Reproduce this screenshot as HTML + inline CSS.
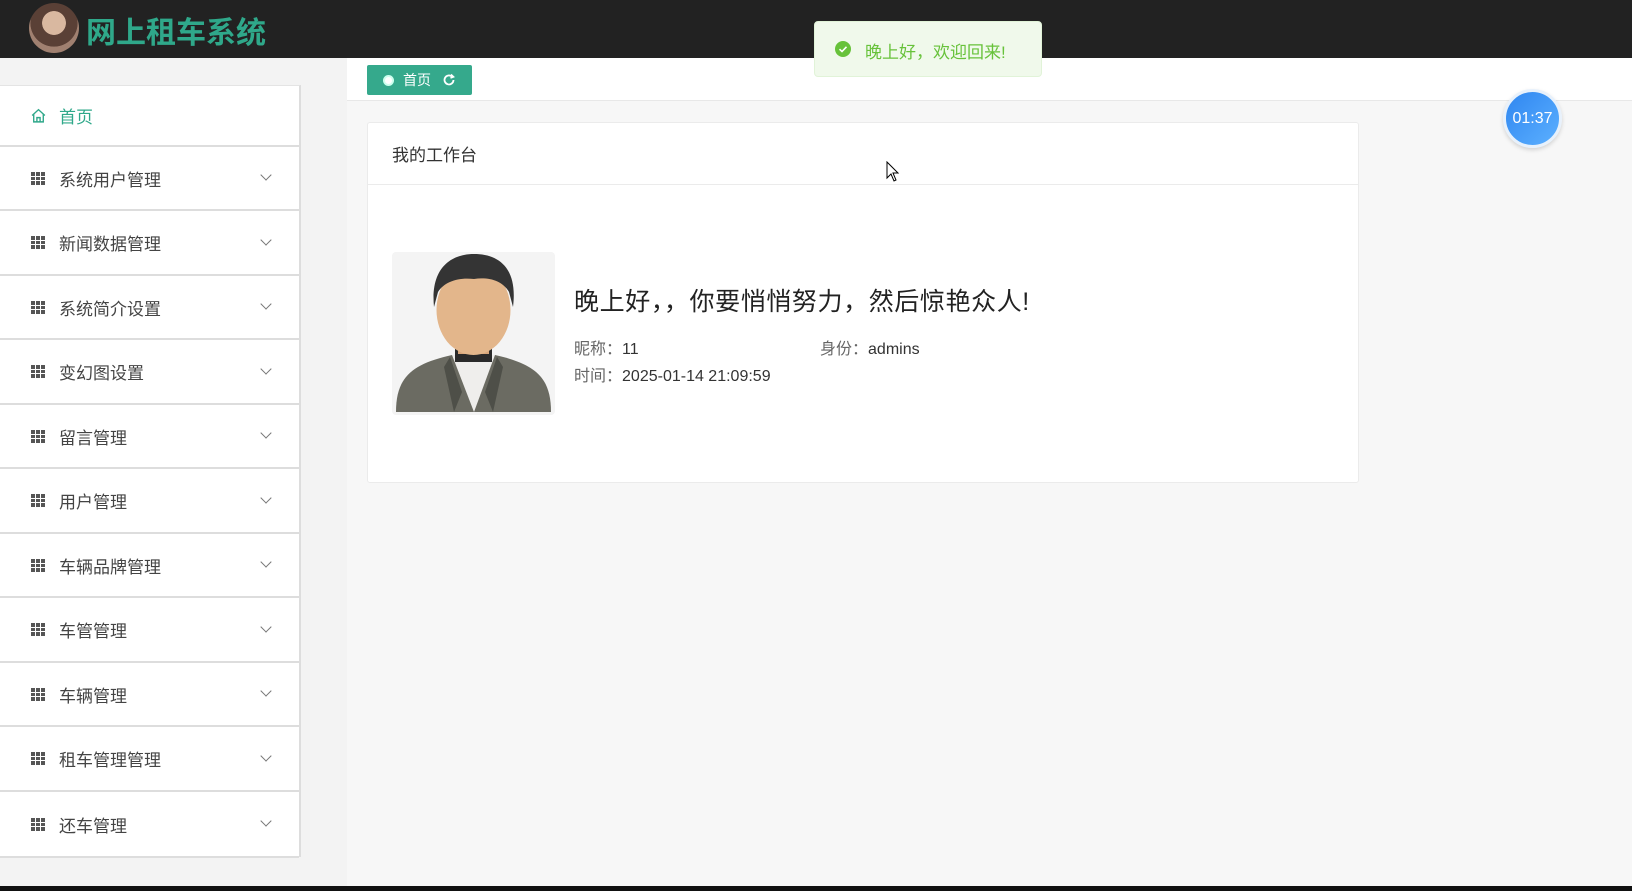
<!DOCTYPE html>
<html><head><meta charset="utf-8"><style>
*{margin:0;padding:0;box-sizing:border-box}
body{width:1632px;height:891px;overflow:hidden;background:#f3f3f3;font-family:"Liberation Sans","Noto Sans CJK SC",sans-serif;position:relative;color:#333}
.hdr{position:absolute;left:0;top:0;width:1632px;height:58px;background:#222}
.logo{position:absolute;left:29px;top:3px;width:50px;height:50px;border-radius:50%;background:radial-gradient(circle at 50% 40%,#d9b8a0 0 30%,#5a4036 31% 60%,#a08070 61%);overflow:hidden}
.title{position:absolute;left:86px;top:8px;font-size:30px;font-weight:bold;color:#2fa88a}
.side{position:absolute;left:0;top:85px;width:301px;height:772px;background:#fff;border-right:2px solid #ddd;border-top:1px solid #e4e4e4}
.it{position:absolute;left:0;width:299px;border-bottom:2px solid #ddd;display:flex;align-items:center;font-size:17px;color:#444}
.it .g{position:absolute;left:31px;width:14px;height:13px;background:#555}
.it .g::before{content:"";position:absolute;left:4px;top:0;width:1px;height:13px;background:#fff;box-shadow:5px 0 0 #fff}
.it .g::after{content:"";position:absolute;left:0;top:4px;width:14px;height:1px;background:#fff;box-shadow:0 4px 0 #fff}
.it span{position:absolute;left:59px}
.it i{position:absolute;left:262px;width:8px;height:8px;border-right:1.5px solid #777;border-bottom:1.5px solid #777;transform:rotate(45deg);margin-top:-6px}
.main{position:absolute;left:347px;top:58px;width:1285px;height:828px;background:#f7f7f7}
.tabs{position:absolute;left:347px;top:58px;width:1285px;height:43px;background:#fff;border-bottom:1px solid #e8e8e8}
.tab{position:absolute;left:367px;top:65px;width:105px;height:30px;background:#35a98c;border-radius:2px;color:#fff;font-size:14px}
.card{position:absolute;left:367px;top:122px;width:992px;height:361px;background:#fff;border:1px solid #ebebeb;border-radius:3px}
.ch{height:62px;border-bottom:1px solid #ebebeb;padding:18px 24px;font-size:17px;color:#333}
.toast{position:absolute;left:814px;top:21px;width:228px;height:56px;background:#f0f9eb;border:1px solid #e1f3d8;border-radius:4px;color:#67c23a;font-size:17px}
.timer{position:absolute;left:1503px;top:89px;width:59px;height:59px;border-radius:50%;background:linear-gradient(135deg,#2f86f0,#5cb0ff);border:3px solid #e8f1fb;color:#fff;font-size:16px;text-align:center;line-height:53px;box-shadow:0 2px 4px rgba(0,0,0,.15)}
.bot{position:absolute;left:0;top:886px;width:1632px;height:5px;background:#111}
</style></head><body>
<div class="hdr"></div>
<div class="logo"></div>
<div class="title">网上租车系统</div>

<div class="side">
<div class="it" style="top:0;height:61px;color:#2fa88a">
<svg style="position:absolute;left:30px" width="17" height="17" viewBox="0 0 16 16"><path d="M2 8 L8 2.5 L14 8 M3.5 6.8 V14 H12.5 V6.8 M6.5 14 V10 H9.5 V14" fill="none" stroke="#2fa88a" stroke-width="1.3"/></svg>
<span>首页</span></div>
<div class="it" style="top:61px;height:64px"><b class="g"></b><span>系统用户管理</span><i></i></div>
<div class="it" style="top:125px;height:65px"><b class="g"></b><span>新闻数据管理</span><i></i></div>
<div class="it" style="top:190px;height:64px"><b class="g"></b><span>系统简介设置</span><i></i></div>
<div class="it" style="top:254px;height:65px"><b class="g"></b><span>变幻图设置</span><i></i></div>
<div class="it" style="top:319px;height:64px"><b class="g"></b><span>留言管理</span><i></i></div>
<div class="it" style="top:383px;height:65px"><b class="g"></b><span>用户管理</span><i></i></div>
<div class="it" style="top:448px;height:64px"><b class="g"></b><span>车辆品牌管理</span><i></i></div>
<div class="it" style="top:512px;height:65px"><b class="g"></b><span>车管管理</span><i></i></div>
<div class="it" style="top:577px;height:64px"><b class="g"></b><span>车辆管理</span><i></i></div>
<div class="it" style="top:641px;height:65px"><b class="g"></b><span>租车管理管理</span><i></i></div>
<div class="it" style="top:706px;height:66px"><b class="g"></b><span>还车管理</span><i></i></div>
</div>

<div class="main"></div>
<div class="tabs"></div>
<div class="tab">
<span style="position:absolute;left:16px;top:10px;width:11px;height:11px;border-radius:50%;background:#fff;border:2px solid #cfe"></span>
<span style="position:absolute;left:36px;top:5px">首页</span>
<svg style="position:absolute;left:75px;top:8px" width="14" height="14" viewBox="0 0 14 14"><path d="M11.5 7 A4.5 4.5 0 1 1 10 3.6" fill="none" stroke="#fff" stroke-width="1.8"/><path d="M9 1.5 L11.5 3.8 L8.5 5" fill="none" stroke="#fff" stroke-width="1.6"/></svg>
</div>

<div class="card">
<div class="ch">我的工作台</div>
<svg style="position:absolute;left:24px;top:129px" width="163" height="163" viewBox="0 0 163 163">
<rect width="163" height="163" rx="4" fill="#f4f4f4"/>
<path d="M4 160 C4 125 20 112 60 103 L103 103 C143 112 159 125 159 160 Z" fill="#6b6b62"/>
<path d="M60 103 L82 160 L103 103 Z" fill="#efeeec"/>
<path d="M58 105 L70 140 L62 160 L52 115Z M105 105 L93 140 L101 160 L111 115Z" fill="#4e4f48"/>
<rect x="63" y="88" width="37" height="22" fill="#2a2a2a"/>
<rect x="66" y="84" width="31" height="18" fill="#d7a57a"/>
<ellipse cx="81.5" cy="58" rx="37" ry="45" fill="#e3b68b"/>
<path d="M42 55 C38 15 60 2 82 2 C106 2 126 15 121 55 L117 40 C110 28 96 25 82 27 C66 25 52 30 46 40 Z" fill="#343434"/>
</svg>
<div style="position:absolute;left:206px;top:159px;font-size:25px;letter-spacing:0.6px;color:#222">晚上好，，你要悄悄努力，然后惊艳众人!</div>
<div style="position:absolute;left:206px;top:212px;font-size:16px;color:#666">昵称：<span style="color:#333">11</span></div>
<div style="position:absolute;left:452px;top:212px;font-size:16px;color:#666">身份：<span style="color:#333">admins</span></div>
<div style="position:absolute;left:206px;top:239px;font-size:16px;color:#666">时间：<span style="color:#333">2025-01-14 21:09:59</span></div>
</div>

<div class="toast">
<svg style="position:absolute;left:20px;top:19px" width="16" height="16" viewBox="0 0 16 16"><circle cx="8" cy="8" r="8" fill="#67c23a"/><path d="M4.5 8.2 L7 10.5 L11.5 5.8" fill="none" stroke="#fff" stroke-width="1.6"/></svg>
<span style="position:absolute;left:50px;top:16px">晚上好，欢迎回来!</span>
</div>

<div class="timer">01:37</div>
<svg style="position:absolute;left:886px;top:161px" width="14" height="22" viewBox="0 0 14 22"><path d="M1 1 L1 17 L5 13 L8 20 L10 19 L7 12 L12 12 Z" fill="#fff" stroke="#000" stroke-width="1"/></svg>
<div class="bot"></div>
</body></html>
